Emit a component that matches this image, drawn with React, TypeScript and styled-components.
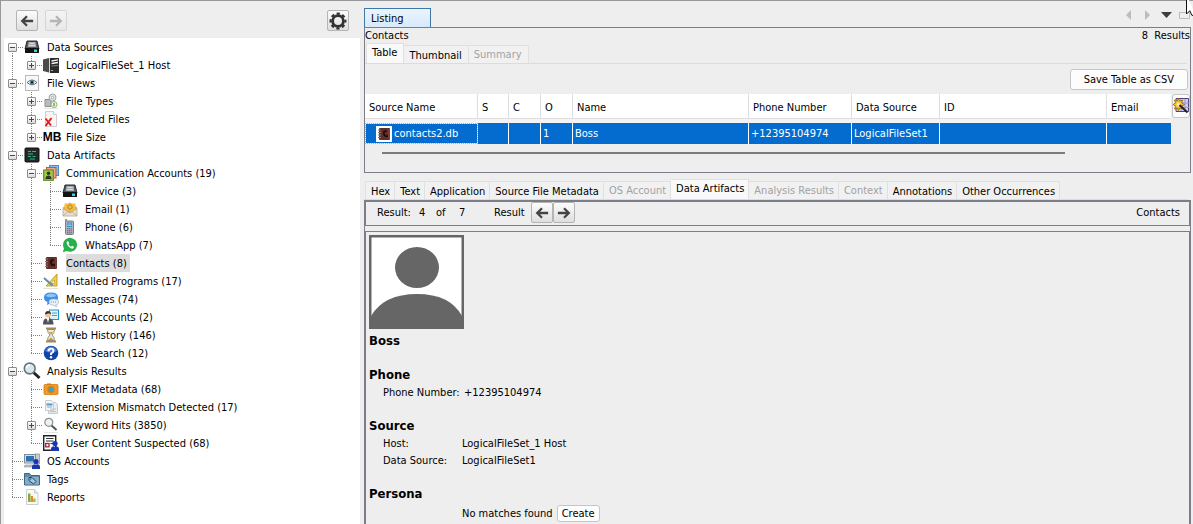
import React, { useState } from "react";
import styled, { createGlobalStyle, css } from "styled-components";

const LINE = "#7b7e88";
const FONT = '"DejaVu Sans Condensed", "DejaVu Sans", "Noto Sans", sans-serif';

const GlobalStyle = createGlobalStyle`
  *, *::before, *::after { box-sizing: border-box; }
  body {
    margin: 0;
    background: #eee;
    color: #000;
    font: 11px/18px ${FONT};
  }
  button { font: inherit; color: inherit; padding: 0; }
`;

const Window = styled.div`
  display: flex;
  min-height: 100vh;
  border-top: 1px solid #98989c;
  border-left: 1px solid #98989c;
  padding: 0 2px 0 3px;
  gap: 4px;
  overflow: hidden;
`;

/* ---------- left pane ---------- */

const SidePane = styled.nav`
  display: flex;
  flex-direction: column;
  flex: 0 0 356px;
`;

const SideToolbar = styled.div`
  display: flex;
  align-items: center;
  gap: 7px;
  height: 37px;
  padding: 2px 11px 0 12px;
`;

const Spacer = styled.span`
  flex: 1;
`;

const ToolButton = styled.button`
  display: flex;
  align-items: center;
  justify-content: center;
  width: 22px;
  height: 21px;
  border: 1px solid #b4b4b4;
  border-radius: 2px;
  background: linear-gradient(#fcfcfc, #dedede);
  color: #444;
  &:disabled {
    border-color: #d6d6d6;
    background: linear-gradient(#f4f4f4, #e8e8e8);
    color: #b4b4b4;
  }
`;

const Tree = styled.ul`
  flex: 1;
  margin: 0;
  padding: 0;
  list-style: none;
  background: #fff;
`;

const TreeRow = styled.li`
  display: flex;
  height: 18px;
`;

const dotsDown = "repeating-linear-gradient(#808080 0 1px, transparent 1px 2px)";
const dotsAcross = "repeating-linear-gradient(90deg, #808080 0 1px, transparent 1px 2px)";

const Guide = styled.span<{ $kind: "none" | "pass" | "tee" | "end" | "start" }>`
  display: flex;
  flex: 0 0 19px;
  align-items: flex-start;
  padding: 5px 0 0 4px;
  background-repeat: no-repeat;
  ${({ $kind }) =>
    $kind === "pass" &&
    css`
      background-image: ${dotsDown};
      background-size: 1px 18px;
      background-position: 8px 0;
    `}
  ${({ $kind }) =>
    ($kind === "tee" || $kind === "end" || $kind === "start") &&
    css`
      background-image: ${dotsDown}, ${dotsAcross};
      background-size: 1px ${$kind === "tee" ? 18 : 9}px, 11px 1px;
      background-position: 8px ${$kind === "start" ? 9 : 0}px, 8px 9px;
    `}
`;

const Toggle = styled.button`
  display: flex;
  width: 9px;
  height: 9px;
  border: 1px solid #8c8c8c;
  border-radius: 1px;
  background: linear-gradient(#fff, #dcdcdc);
`;

const NodeIcon = styled.span`
  display: flex;
  flex: 0 0 18px;
  min-width: 0;
  align-items: center;
  justify-content: center;
`;

const MegaBytes = styled.b`
  padding-left: 2px;
  font: bold 12px/18px "Liberation Sans", Arial, sans-serif;
`;

const NodeLabel = styled.span<{ $selected: boolean }>`
  margin-left: 6px;
  padding: 1px 3px 0 0;
  white-space: nowrap;
  background: ${({ $selected }) => ($selected ? "#dcdcdc" : "transparent")};
`;

/* ---------- right pane ---------- */

const MainPane = styled.main`
  display: flex;
  flex: 1;
  flex-direction: column;
  min-width: 0;
`;

const EditorBar = styled.div`
  display: flex;
  align-items: flex-end;
  height: 26px;
`;

const EditorTab = styled.button`
  width: 67px;
  height: 19px;
  padding: 1px 0 0 6px;
  border: 1px solid #3f78a8;
  border-bottom: 0;
  background: linear-gradient(#eaf4fe, #d8e9fa);
  text-align: left;
`;

const WindowControls = styled.div`
  display: flex;
  align-self: center;
  gap: 7px;
  margin-left: auto;
  padding: 2px 1px 0 0;
`;

const ControlButton = styled.button`
  display: flex;
  width: 11px;
  height: 11px;
  border: 0;
  background: none;
`;

const ResultPanel = styled.section`
  border: 1px solid ${LINE};
  height: 146px;
`;

const Caption = styled.div`
  display: flex;
  justify-content: space-between;
  height: 15px;
  line-height: 15px;
`;

const Count = styled.span`
  white-space: pre;
`;

const TabStrip = styled.div<{ $height: number }>`
  display: flex;
  align-items: flex-end;
  height: ${({ $height }) => $height}px;
  margin-right: 3px;
  padding-left: 1px;
  border-bottom: 1px solid #dcdcdc;
`;

const Tab = styled.button<{ $pad: number }>`
  height: 18px;
  padding: 2px ${({ $pad }) => $pad}px 0 5px;
  border: 1px solid #e0e0e0;
  border-left-width: 0;
  border-bottom: 0;
  background: #f1f1f1;
  line-height: 14px;
  white-space: nowrap;
  &:first-child { border-left-width: 1px; }
  &:disabled { color: #a2a2a2; padding-top: 0; }
  &[aria-selected="true"] {
    height: 20px;
    padding-top: 0;
    padding-bottom: 1px;
    background: #f9f9f9;
  }
`;

const Actions = styled.div`
  display: flex;
  justify-content: flex-end;
  padding: 5px 2px 4px;
`;

const PushButton = styled.button<{ $height: number }>`
  height: ${({ $height }) => $height}px;
  padding: 0 ${({ $height }) => ($height > 18 ? 13 : 4)}px;
  border: 1px solid #c6c6c6;
  border-radius: 3px;
  background: #fdfdfd;
  line-height: 14px;
  white-space: nowrap;
`;

const GridArea = styled.div`
  display: flex;
  gap: 1px;
`;

const Grid = styled.table`
  flex: 1;
  min-width: 0;
  width: 100%;
  table-layout: fixed;
  border-collapse: separate;
  border-spacing: 0;
`;

const HeadCell = styled.th`
  height: 25px;
  padding: 3px 4px 0;
  border-right: 1px solid #dedede;
  border-bottom: 1px solid #dedede;
  background: #fff;
  font-weight: normal;
  text-align: left;
  white-space: nowrap;
  &:last-child { border-right-color: #fff; }
`;

const GapCell = styled.td`
  height: 4px;
  padding: 0;
  background: #f4f4f4;
`;

const Cell = styled.td<{ $lead?: boolean }>`
  height: 21px;
  padding: 0 3px 0 2px;
  border-right: 1px solid #fff;
  background: #046ccf;
  color: #fff;
  white-space: nowrap;
  &:last-child { border-right-color: #046ccf; }
  ${({ $lead }) =>
    $lead &&
    css`
      padding: 0;
      border: 1px dotted #f0a050;
      background: #046ccf linear-gradient(#046ccf, #046ccf) padding-box;
      background-color: #111;
    `}
`;

const SourceName = styled.span`
  display: flex;
  align-items: center;
  gap: 2px;
  padding-left: 10px;
`;

const IconTile = styled.span`
  display: flex;
  width: 16px;
  height: 16px;
  background: #fff;
`;

const ColumnButton = styled.button`
  display: flex;
  flex: 0 0 16px;
  align-items: center;
  justify-content: center;
  height: 24px;
  border: 1px solid #c6c6c6;
  border-radius: 3px;
  background: #fdfdfd;

  svg { flex: none; }
`;

const ScrollTrack = styled.div`
  margin: 8px 125px 0 17px;
  height: 2px;
  background: #7c7c7c;
`;

const DetailPanel = styled.section`
  display: flex;
  flex: 1;
  flex-direction: column;
  gap: 5px;
  border: 1px solid ${LINE};
  border-bottom: 0;
`;

const ResultBar = styled.div`
  display: flex;
  align-items: center;
  height: 25px;
  padding: 0 9px 2px 11px;
  border: 1px solid ${LINE};
`;

const BarText = styled.span<{ $width: number }>`
  width: ${({ $width }) => $width}px;
`;

const DetailBody = styled.div`
  flex: 1;
  padding: 3px 3px 0;
  border: 1px solid ${LINE};
  border-bottom: 0;
  line-height: 17px;
`;

const Avatar = styled.svg`
  display: block;
  margin-bottom: 3px;
`;

const Heading = styled.h2`
  margin: 0 0 17px;
  font-size: 13px;
  line-height: 17px;
`;

const GroupHeading = styled(Heading)`
  margin: 0;
`;

const Facts = styled.dl<{ $terms: number }>`
  display: grid;
  grid-template-columns: ${({ $terms }) => $terms}px 1fr;
  margin: 0 0 16px;
  padding: 1px 0 0 14px;
`;

const Term = styled.dt`
  white-space: nowrap;
`;

const Value = styled.dd`
  margin: 0;
`;

const PersonaRow = styled.div`
  display: flex;
  align-items: center;
  gap: 4px;
  padding: 3px 0 0 93px;
`;

const Pointer = styled.svg`
  position: absolute;
  top: 0;
  right: 0;
`;

/* ---------- icons ---------- */

const Svg = ({ children, size = 16 }: { children: React.ReactNode; size?: number }) => (
  <svg width={size} height={size} viewBox="0 0 16 16" aria-hidden="true">
    {children}
  </svg>
);

const Arrow = ({ right = false }: { right?: boolean }) => (
  <Svg size={14}>
    <path
      d={right ? "M1 8h12M8 2.5 13.5 8 8 13.5" : "M15 8H3M8 2.5 2.5 8 8 13.5"}
      fill="none"
      stroke="currentColor"
      strokeWidth="2.6"
    />
  </Svg>
);

const Gear = () => (
  <svg width="18" height="18" viewBox="0 0 18 18" aria-hidden="true">
    <circle cx="9" cy="9" r="5.4" fill="none" stroke="#333" strokeWidth="2.8" />
    <circle cx="9" cy="9" r="7.4" fill="none" stroke="#333" strokeWidth="2.2" strokeDasharray="3.3 2.512" strokeDashoffset="1.65" />
  </svg>
);

const Person = ({ x = 0, y = 0 }: { x?: number; y?: number }) => (
  <g transform={`translate(${x} ${y})`} fill="#1a35b4">
    <circle cx="4" cy="2.6" r="2.6" />
    <path d="M0 10V7.6Q0 5.4 2.6 5.2L4 6l1.4-.8Q8 5.4 8 7.6V10z" />
  </g>
);

const icons: Record<string, React.ReactNode> = {
  drive: (
    <Svg>
      <path d="M3 2h10l2 8H1z" fill="#55585c" stroke="#2c2e31" />
      <path d="M4.5 3h7l.8 5H3.700z" fill="#a9aeb3" />
      <path d="M5.5 4.500h5M5 6.500h6" stroke="#e1e4e6" strokeWidth=".8" />
      <rect x="1" y="9" width="14" height="5" rx=".6" fill="#101214" />
      <rect x="10" y="10.500" width="3" height="2.500" fill="#35d6dc" />
    </Svg>
  ),
  server: (
    <Svg>
      <path d="M0 2.5 6 1v14.5L0 14z" fill="#4b4b4b" />
      <path d="M6.8 1H16v15H6.8z" fill="#2b2b2b" />
      <path d="M8.500 4 15 2.800M8.500 6.500l6.500-1" stroke="#f2f2f2" strokeWidth="1.3" />
      <path d="M8.500 9 15 8.500" stroke="#8a8a8a" />
      <path d="M8 13.5h2" stroke="#aaa" />
    </Svg>
  ),
  eye: (
    <Svg>
      <rect x="1.5" y=".5" width="13" height="15" fill="#f7f7f7" stroke="#b9b9b9" />
      <path d="M3 7.5Q8 2.500 13 7.500 8 12 3 7.500z" fill="#fff" stroke="#666" />
      <circle cx="8" cy="7.300" r="2.300" fill="#4a8a9c" />
      <circle cx="8" cy="7.300" r="1" fill="#111" />
    </Svg>
  ),
  types: (
    <Svg>
      <path d="M2 6.5h6v7H2z" fill="#b9bcbc" stroke="#8e9292" />
      <circle cx="9.500" cy="4.500" r="3.500" fill="#dfe6ea" stroke="#93a6ad" />
      <circle cx="9.500" cy="4.500" r="1.200" fill="#fff" stroke="#b6907e" strokeWidth=".8" />
      <circle cx="11" cy="11.500" r="3" fill="#eef6e4" stroke="#8fb06a" />
      <path d="M11 10v3" stroke="#6d9d33" strokeWidth="1.400" />
      <path d="M1 15.500h14" stroke="#e4e4e4" />
    </Svg>
  ),
  deleted: (
    <Svg>
      <path d="M2.500.5h8l3 3v12h-11z" fill="#f6f6f6" stroke="#cfcfcf" />
      <path d="M10.500.5v3h3" fill="#fff" stroke="#cfcfcf" />
      <path d="M2.500 7.500 8 14.500M8.500 7 2.500 15" stroke="#ec1c1c" strokeWidth="2" />
    </Svg>
  ),
  artifacts: (
    <Svg>
      <rect x="1" y="1" width="14" height="14" rx="1" fill="#23292a" stroke="#0c0f10" />
      <path d="M4 4.500h3M8 4.500h4M4 7h5M4 9.500h3M8.500 9.500h3M6 12h5" stroke="#35b67c" strokeWidth="1.200" />
    </Svg>
  ),
  accounts: (
    <Svg>
      <rect x="6.500" y=".5" width="9" height="10" fill="#7fc2ea" stroke="#4591c2" />
      <rect x="3.500" y="2.500" width="9.500" height="10.500" fill="#f3a28c" stroke="#dd4b38" />
      <rect x=".7" y="5" width="9.600" height="10.300" fill="#9fcc45" stroke="#5f9220" strokeWidth="1.200" />
      <circle cx="5.500" cy="8.300" r="1.800" fill="#333" />
      <path d="M2.500 14q0-3.500 3-3.500t3 3.500z" fill="#333" />
    </Svg>
  ),
  email: (
    <Svg>
      <path d="M1 6.500 8 1.500l7 5v8H1z" fill="#d9a233" />
      <path d="M2.500 2.500h11v8h-11z" fill="#f4bd3f" />
      <circle cx="8" cy="6" r="2.200" fill="none" stroke="#b9822a" />
      <path d="M1 7.500l7 4.500 7-4.500V15H1z" fill="#e6dfd0" stroke="#b5a88e" strokeWidth=".8" />
      <path d="M1 15l5-4.500M15 15l-5-4.500" stroke="#b5a88e" strokeWidth=".8" />
    </Svg>
  ),
  phone: (
    <Svg>
      <path d="M4 0v3" stroke="#777" strokeWidth="1.500" />
      <rect x="3.500" y="2" width="8" height="13.500" rx="1" fill="#aeb4b9" stroke="#7a8086" />
      <rect x="5" y="3.500" width="5" height="4.500" fill="#2f8fe0" />
      <path d="M5.500 5h4M5.500 6.500h4" stroke="#bfe2fb" strokeWidth=".7" />
      <path d="M5 9.800h5M5 11.800h5M5 13.800h5" stroke="#5e646a" strokeDasharray="1.300 .6" />
    </Svg>
  ),
  whatsapp: (
    <Svg>
      <path d="M.8 15.300 2 11.400A7 7 0 1 1 4.700 14z" fill="#27b04c" />
      <path d="M5.400 4.300c-1.500 1-.7 3 1 4.900s4 3.200 5.200 1.700c.8-1-.1-1.500-1.500-2.100l-1 1C8 9.400 7 8.300 6.500 7.300l.7-.9C6.700 5 6.200 3.900 5.400 4.300z" fill="#fff" />
    </Svg>
  ),
  contacts: (
    <Svg>
      <rect x="3" y="2" width="11" height="12" rx="1" fill="#5f2f28" />
      <path d="M13 3v10" stroke="#8d4a3e" />
      <path d="M2 4h3M2 6.500h3M2 9h3M2 11.500h3" stroke="#857b79" />
      <path d="M8.200 5.200Q6.800 8 9.700 10.600" fill="none" stroke="#150706" strokeWidth="1.400" />
      <path d="m8 5.300 1.700-.6.500 1.300M9.500 10.500l1.800-.2-.4-1.500" fill="none" stroke="#150706" strokeWidth="1.200" />
    </Svg>
  ),
  programs: (
    <Svg>
      <path d="M14 1v12H3z" fill="#f0cf4a" stroke="#b48d1a" strokeWidth=".8" />
      <path d="M11.500 7v3.500H8z" fill="#fff" stroke="#b48d1a" strokeWidth=".6" />
      <path d="M1 5 9.500 12.500" stroke="#5d8fa8" strokeWidth="2" />
      <path d="M.5 15.500h15" stroke="#e2e2e2" />
    </Svg>
  ),
  messages: (
    <Svg>
      <path d="M1 6.500Q1 1.500 8 1.500t7 5-6 5L4 14l.5-3Q1 10 1 6.500z" fill="#3b8de8" />
      <path d="M2.500 5Q4 2.500 8 2.500T13.500 5Q8 7.500 2.500 5z" fill="#8cc4fa" />
      <path d="M6 11q0-3 4.700-3t4.800 3-3 3l1.500 1.700-4-1.500Q6 14 6 11z" fill="#e9f0f7" stroke="#a5b6c8" strokeWidth=".7" />
      <path d="M8 11h5.500" stroke="#7e93aa" strokeDasharray="1 1" />
    </Svg>
  ),
  webAccounts: (
    <Svg>
      <rect x="6.500" y="1" width="9" height="9.500" fill="#dff2fb" stroke="#2492c7" />
      <path d="M9 4h5M9 6.500h5" stroke="#36a8dc" strokeWidth="1.200" />
      <circle cx="5" cy="5.800" r="2.800" fill="#edc69c" />
      <path d="M2 5.500Q2 2 5 2t3 3.500L6 4.300z" fill="#4a2e1a" />
      <path d="M0 15.500Q0 10 3 9.500l2 1.500 2-1.500q3.500.5 3.500 6z" fill="#4d5359" />
      <path d="M4 9.800h2L5 14z" fill="#fff" />
    </Svg>
  ),
  history: (
    <Svg>
      <path d="M3 1.500h10M3 14.500h10" stroke="#a48b55" strokeWidth="2" />
      <path d="M4.500 2.500h7Q11.500 6 9 8q2.500 2 2.500 5.500h-7Q4.500 10 7 8 4.500 6 4.500 2.500z" fill="#eee9dc" stroke="#8c8269" strokeWidth=".9" />
      <path d="M6 5h4L8 7.500zM5.500 13l2.500-2.500 2.500 2.500z" fill="#c59b3c" />
    </Svg>
  ),
  search: (
    <Svg>
      <circle cx="8" cy="8" r="7.300" fill="#1243a8" />
      <path d="M2 6Q4 1.500 8 1.500T14 6Q8 9 2 6z" fill="#4b7fdc" />
      <path d="M5.500 6.200Q5.500 3.600 8 3.600t2.500 2.200Q10.500 7.300 8 8.500v1.500" fill="none" stroke="#fff" strokeWidth="1.900" />
      <circle cx="8" cy="12.200" r="1.200" fill="#fff" />
    </Svg>
  ),
  analysis: (
    <svg width="18" height="18" viewBox="0 0 18 18" aria-hidden="true">
      <path d="m10 10 6.500 6" stroke="#222" strokeWidth="3" />
      <circle cx="6.700" cy="6.500" r="5.400" fill="#d5e8f2" stroke="#6d7478" strokeWidth="1.600" />
      <path d="M3.500 6q.5-3 3.500-3" fill="none" stroke="#fff" strokeWidth="1.300" />
    </svg>
  ),
  exif: (
    <Svg>
      <path d="M4 2.500h4v2H4z" fill="#c7730f" />
      <rect x="1" y="3.500" width="14" height="10" rx="1" fill="#f09a2b" stroke="#d07c12" strokeWidth=".8" />
      <circle cx="8" cy="8.500" r="3.700" fill="#d9801a" />
      <circle cx="8" cy="8.500" r="2.500" fill="#3fa0c4" />
    </Svg>
  ),
  mismatch: (
    <Svg>
      <path d="M5.500 3.500h7l2 2v9h-9z" fill="#e9edf0" stroke="#c3c9ce" />
      <path d="M2.500 1.500h6l2 2v8h-8z" fill="#f3f5f7" stroke="#c8ced2" />
      <path d="M3.500 5.500h6" stroke="#4f98cc" strokeWidth="2" />
      <path d="M4 5h2M4 8h5" stroke="#7fa8c4" />
      <path d="M7 10h6M7 12.500h6" stroke="#b9c1c7" />
    </Svg>
  ),
  keyword: (
    <Svg>
      <path d="m8 8 5.500 5" stroke="#555" strokeWidth="2" />
      <circle cx="5.800" cy="5.300" r="4" fill="#eaf3ef" stroke="#8d9390" strokeWidth="1.200" />
      <path d="M1 15.500h14" stroke="#e4e4e4" />
    </Svg>
  ),
  suspected: (
    <Svg>
      <path d="M.7.7h12v14.600H.7z" fill="#fff" stroke="#222" strokeWidth="1.400" />
      <path d="M3 3.500h7.500M3 6h7.500M7.500 8.500h3" stroke="#333" strokeWidth="1.100" />
      <rect x="2.700" y="8.500" width="3.300" height="3.300" fill="#fff" stroke="#a3223c" strokeWidth="1.300" />
      <Person x={8} y={6} />
    </Svg>
  ),
  os: (
    <Svg>
      <path d="M11 1h4.500v10H11z" fill="#c6ccd1" stroke="#8e959b" strokeWidth=".8" />
      <rect x=".5" y="1.500" width="11" height="8.500" fill="#d7dde1" stroke="#848c93" />
      <rect x="2" y="3" width="8" height="5.500" fill="#2873b8" />
      <path d="M1 12h8v2H0z" fill="#bfc5ca" stroke="#8b9298" strokeWidth=".6" />
      <Person x={8} y={6} />
    </Svg>
  ),
  tags: (
    <Svg>
      <path d="M.5 2.500h5l1.500 2h8.500V14H.5z" fill="#5f8fb0" stroke="#3d6784" />
      <path d="M1 6h14v7.500H1z" fill="#83adc9" />
      <path d="M5 6.500h3l4 4-2.500 2.500L5 9.500z" fill="#a9c8dc" stroke="#27475c" />
      <circle cx="6.700" cy="8" r=".7" fill="#27475c" />
    </Svg>
  ),
  reports: (
    <Svg>
      <path d="M2.500.5h8l3.500 3.500v11.500H2.500z" fill="#fafafa" stroke="#cdcdcd" />
      <path d="M10.500.5V4H14" fill="#e9e9e9" stroke="#cdcdcd" />
      <path d="M4 4.500h2.500v8.500H4z" fill="#7fb03b" />
      <path d="M6.700 7h2.300v6H6.700z" fill="#e98b2a" />
      <path d="M9.200 9.500h2.300V13H9.200z" fill="#8fbf4d" />
    </Svg>
  ),
  size: <MegaBytes>MB</MegaBytes>,
};

const Wand = () => (
  <svg width="16" height="18" viewBox="0 0 16 18" aria-hidden="true">
    <path d="M3 1.500h12.500v13H3z" fill="#cfcbee" stroke="#4a4680" />
    <path d="M4 6h12M4 10.500h12M8 2v12M12 2v12" stroke="#8f8bc4" strokeWidth=".8" />
    <path d="m5.500 1.500 1.200 2.700L9.500 3 8.600 5.900 11.500 7.500 8.600 9 9.500 12 6.600 10.900 5.500 13.500 4.300 10.800 1.500 12l1-3L0 7.500 2.500 6l-1-3 2.800 1.200z" fill="#fbc93d" stroke="#9b6512" strokeWidth=".9" />
    <circle cx="5.500" cy="7.500" r="1.600" fill="#fff3b8" />
    <path d="m6.500 8 8 7.500" stroke="#222" strokeWidth="2" />
  </svg>
);

/* ---------- data ---------- */

type Node = { label: string; icon: string; children?: Node[]; closed?: boolean };

const tree: Node[] = [
  {
    label: "Data Sources",
    icon: "drive",
    children: [{ label: "LogicalFileSet_1 Host", icon: "server", closed: true }],
  },
  {
    label: "File Views",
    icon: "eye",
    children: [
      { label: "File Types", icon: "types", closed: true },
      { label: "Deleted Files", icon: "deleted", closed: true },
      { label: "File Size", icon: "size", closed: true },
    ],
  },
  {
    label: "Data Artifacts",
    icon: "artifacts",
    children: [
      {
        label: "Communication Accounts (19)",
        icon: "accounts",
        children: [
          { label: "Device (3)", icon: "drive" },
          { label: "Email (1)", icon: "email" },
          { label: "Phone (6)", icon: "phone" },
          { label: "WhatsApp (7)", icon: "whatsapp" },
        ],
      },
      { label: "Contacts (8)", icon: "contacts" },
      { label: "Installed Programs (17)", icon: "programs" },
      { label: "Messages (74)", icon: "messages" },
      { label: "Web Accounts (2)", icon: "webAccounts" },
      { label: "Web History (146)", icon: "history" },
      { label: "Web Search (12)", icon: "search" },
    ],
  },
  {
    label: "Analysis Results",
    icon: "analysis",
    children: [
      { label: "EXIF Metadata (68)", icon: "exif" },
      { label: "Extension Mismatch Detected (17)", icon: "mismatch" },
      { label: "Keyword Hits (3850)", icon: "keyword", closed: true },
      { label: "User Content Suspected (68)", icon: "suspected" },
    ],
  },
  { label: "OS Accounts", icon: "os" },
  { label: "Tags", icon: "tags" },
  { label: "Reports", icon: "reports" },
];

const columns: { title: string; width?: number; value: string }[] = [
  { title: "Source Name", width: 113, value: "contacts2.db" },
  { title: "S", width: 31, value: "" },
  { title: "C", width: 32, value: "" },
  { title: "O", width: 32, value: "1" },
  { title: "Name", width: 176, value: "Boss" },
  { title: "Phone Number", width: 103, value: "+12395104974" },
  { title: "Data Source", width: 88, value: "LogicalFileSet1" },
  { title: "ID", value: "" },
  { title: "Email", width: 64, value: "" },
];

const listTabs = [
  { title: "Table" },
  { title: "Thumbnail" },
  { title: "Summary", disabled: true },
];

const detailTabs = [
  { title: "Hex" },
  { title: "Text" },
  { title: "Application" },
  { title: "Source File Metadata" },
  { title: "OS Account", disabled: true },
  { title: "Data Artifacts" },
  { title: "Analysis Results", disabled: true },
  { title: "Context", disabled: true },
  { title: "Annotations" },
  { title: "Other Occurrences" },
];

/* ---------- components ---------- */

function Branch({ nodes, trail = [] }: { nodes: Node[]; trail?: boolean[] }) {
  const [flipped, setFlipped] = useState<Record<string, boolean>>({});
  return (
    <>
      {nodes.map((node, i) => {
        const last = i === nodes.length - 1;
        const first = i === 0 && trail.length === 0;
        const expandable = Boolean(node.children || node.closed);
        const open = Boolean(node.children) && !flipped[node.label];
        return (
          <React.Fragment key={node.label}>
            <TreeRow>
              {trail.map((passes, level) => (
                <Guide key={level} $kind={passes ? "pass" : "none"} />
              ))}
              <Guide $kind={first ? "start" : last ? "end" : "tee"}>
                {expandable && (
                  <Toggle
                    aria-label={`${open ? "Collapse" : "Expand"} ${node.label}`}
                    aria-expanded={open}
                    onClick={() => setFlipped({ ...flipped, [node.label]: !flipped[node.label] })}
                  >
                    <svg width="7" height="7" viewBox="0 0 7 7" aria-hidden="true">
                      <path d={open ? "M1 3.5h5" : "M1 3.5h5M3.5 1v5"} stroke="#30478c" />
                    </svg>
                  </Toggle>
                )}
              </Guide>
              <NodeIcon>{icons[node.icon]}</NodeIcon>
              <NodeLabel $selected={node.icon === "contacts"}>{node.label}</NodeLabel>
            </TreeRow>
            {open && <Branch nodes={node.children!} trail={[...trail, !last]} />}
          </React.Fragment>
        );
      })}
    </>
  );
}

function Tabs({
  items,
  initial,
  height,
  pad,
  label,
}: {
  items: { title: string; disabled?: boolean }[];
  initial: string;
  height: number;
  pad: number;
  label: string;
}) {
  const [active, setActive] = useState(initial);
  return (
    <TabStrip role="tablist" aria-label={label} $height={height}>
      {items.map(({ title, disabled }) => (
        <Tab
          key={title}
          role="tab"
          $pad={pad}
          disabled={disabled}
          aria-selected={title === active}
          onClick={() => setActive(title)}
        >
          {title}
        </Tab>
      ))}
    </TabStrip>
  );
}

export default function App() {
  return (
    <>
      <GlobalStyle />
      <Window>
        <SidePane>
          <SideToolbar>
            <ToolButton aria-label="Back"><Arrow /></ToolButton>
            <ToolButton aria-label="Forward" disabled><Arrow right /></ToolButton>
            <Spacer />
            <ToolButton aria-label="Options"><Gear /></ToolButton>
          </SideToolbar>
          <Tree>
            <Branch nodes={tree} />
          </Tree>
        </SidePane>

        <MainPane>
          <EditorBar>
            <EditorTab>Listing</EditorTab>
            <WindowControls>
              <ControlButton aria-label="Scroll tabs left">
                <svg width="11" height="11"><path d="M6 0v10L1 5z" fill="#bcbcbc" /></svg>
              </ControlButton>
              <ControlButton aria-label="Scroll tabs right">
                <svg width="11" height="11"><path d="M2 0v10l5-5z" fill="#bcbcbc" /></svg>
              </ControlButton>
              <ControlButton aria-label="Show opened windows">
                <svg width="11" height="11"><path d="M0 2h11L5.500 8z" fill="#3c3c3c" /></svg>
              </ControlButton>
              <ControlButton aria-label="Maximize window">
                <svg width="11" height="11"><path d="M.5 2.500h10v6H.5zM0 2.500h11" fill="none" stroke="#bcbcbc" /></svg>
              </ControlButton>
            </WindowControls>
          </EditorBar>

          <ResultPanel>
            <Caption>
              <span>Contacts</span>
              <Count>8  Results</Count>
            </Caption>
            <Tabs items={listTabs} initial="Table" height={21} pad={6} label="Result viewers" />
            <Actions>
              <PushButton $height={21}>Save Table as CSV</PushButton>
            </Actions>
            <GridArea>
              <Grid>
                <colgroup>
                  {columns.map(({ title, width }) => (
                    <col key={title} width={width} />
                  ))}
                </colgroup>
                <thead>
                  <tr>
                    {columns.map(({ title }) => (
                      <HeadCell key={title} scope="col">{title}</HeadCell>
                    ))}
                  </tr>
                </thead>
                <tbody>
                  <tr>
                    <GapCell colSpan={columns.length} />
                  </tr>
                  <tr>
                    {columns.map(({ title, value }, i) => (
                      <Cell key={title} $lead={i === 0}>
                        {i === 0 ? (
                          <SourceName>
                            <IconTile>{icons.contacts}</IconTile>
                            {value}
                          </SourceName>
                        ) : (
                          value
                        )}
                      </Cell>
                    ))}
                  </tr>
                </tbody>
              </Grid>
              <ColumnButton aria-label="Choose columns"><Wand /></ColumnButton>
            </GridArea>
            <ScrollTrack />
          </ResultPanel>

          <Tabs items={detailTabs} initial="Data Artifacts" height={27} pad={4} label="Content viewers" />

          <DetailPanel>
            <ResultBar>
              <BarText $width={42}>Result:</BarText>
              <BarText $width={17}>4</BarText>
              <BarText $width={23}>of</BarText>
              <BarText $width={35}>7</BarText>
              <BarText $width={37}>Result</BarText>
              <ToolButton aria-label="Previous result"><Arrow /></ToolButton>
              <ToolButton aria-label="Next result"><Arrow right /></ToolButton>
              <Spacer />
              <span>Contacts</span>
            </ResultBar>
            <DetailBody>
              <Avatar width="95" height="94" viewBox="0 0 95 94" role="img" aria-label="Contact photo">
                <path d="M0 0h95v94H0z" fill="#666" />
                <path d="M2.500 2.500h90v89h-90z" fill="#fff" />
                <ellipse cx="48" cy="32.500" rx="22" ry="20.500" fill="#666" />
                <path d="M2 94V81Q15 59 48 59t45 22v13z" fill="#666" />
              </Avatar>
              <Heading>Boss</Heading>
              <GroupHeading>Phone</GroupHeading>
              <Facts $terms={81}>
                <Term>Phone Number:</Term>
                <Value>+12395104974</Value>
              </Facts>
              <GroupHeading>Source</GroupHeading>
              <Facts $terms={79}>
                <Term>Host:</Term>
                <Value>LogicalFileSet_1 Host</Value>
                <Term>Data Source:</Term>
                <Value>LogicalFileSet1</Value>
              </Facts>
              <GroupHeading>Persona</GroupHeading>
              <PersonaRow>
                <span>No matches found</span>
                <PushButton $height={17}>Create</PushButton>
              </PersonaRow>
            </DetailBody>
          </DetailPanel>
        </MainPane>
      </Window>
      <Pointer width="7" height="16" viewBox="0 0 7 16" aria-hidden="true">
        <path d="M.5-6v20L3.800 10.700 6 15.500l3-1" fill="#fff" stroke="#111" />
      </Pointer>
    </>
  );
}
